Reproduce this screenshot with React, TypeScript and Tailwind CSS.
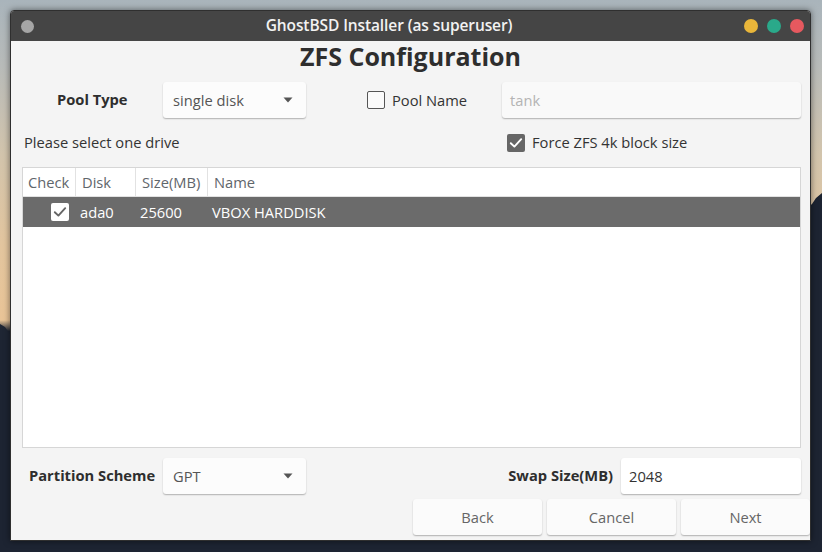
import React from "react";

const font = { fontFamily: '"Open Sans", "Noto Sans", sans-serif' };

function Arrow() {
  return (
    <svg width="10" height="6" viewBox="0 0 10 6" className="block">
      <path d="M0.5 0.5 L9.5 0.5 L5 5.5 Z" fill="#555" />
    </svg>
  );
}

function Check({ color = "#fff" }: { color?: string }) {
  return (
    <svg width="14" height="12" viewBox="0 0 14 12" className="block">
      <path d="M1.8 6.2 L5.4 9.6 L12.2 2.2" fill="none" stroke={color} strokeWidth="1.9" strokeLinecap="round" strokeLinejoin="round" />
    </svg>
  );
}

function Combo({ value }: { value: string }) {
  return (
    <div className="w-[143px] h-[36px] bg-[#fcfcfc] rounded-[3px] shadow-[0_1px_1.5px_rgba(0,0,0,0.28)] flex items-center justify-between pl-[10px] pr-[13px] text-[14.7px] text-[#555]">
      <span>{value}</span>
      <Arrow />
    </div>
  );
}

export default function App() {
  return (
    <div className="relative w-[822px] h-[552px] overflow-hidden bg-[linear-gradient(180deg,#a9b4bb_0%,#b8bbb9_12%,#d2c4ac_28%,#e3c59e_45%,#e9c497_58%,#1d2432_60%,#1b2230_100%)]" style={font}>
      <svg className="absolute left-0 top-0" width="822" height="552" viewBox="0 0 822 552">
        <path d="M0 324 L5 327 L10 334 L20 340 L30 344 L40 350 L40 552 L0 552 Z" fill="#1f2634" />
        <path d="M780 232 L800 214 L812 204 L816 198 L822 193 L822 552 L780 552 Z" fill="#1c2331" />
        <rect x="0" y="340" width="822" height="212" fill="#1d2432" />
        <rect x="780" y="230" width="42" height="130" fill="#1d2432" />
      </svg>
      <div className="absolute left-[10px] top-[10px] w-[801px] h-[531px] flex flex-col bg-[#f4f4f4] border border-[#2f2f2f] rounded-t-[4px] shadow-[0_0_6px_rgba(0,0,0,0.5)] overflow-hidden">
        {/* title bar */}
        <div className="h-[30px] shrink-0 bg-[#454545] flex items-center pl-[10px] pr-[6px] relative">
          <div className="w-[13px] h-[13px] rounded-full bg-[#a6a6a6]" />
          <div className="flex-1 text-center text-[15.5px] font-semibold text-[#f2f2f2] tracking-[-0.1px]">
            GhostBSD Installer (as superuser)
          </div>
          <div className="flex items-center gap-[9px]">
            <div className="w-[14px] h-[14px] rounded-full bg-[#e9b63a]" />
            <div className="w-[14px] h-[14px] rounded-full bg-[#2aa98a]" />
            <div className="w-[14px] h-[14px] rounded-full bg-[#e6595f]" />
          </div>
        </div>
        {/* heading */}
        <div className="h-[31px] shrink-0 flex items-center justify-center text-[25px] font-bold text-[#2e2e2e] leading-none">
          ZFS Configuration
        </div>
        {/* row 1 */}
        <div className="mt-[10px] h-[36px] shrink-0 flex items-center text-[14.7px] text-[#333]">
          <div className="ml-[46px] w-[106px] font-bold text-[#2e2e2e] text-[14.7px] -mt-[1px]">Pool Type</div>
          <Combo value="single disk" />
          <div className="ml-[61px] w-[18px] h-[18px] border-[1.5px] border-[#555] rounded-[2px] bg-[#fafafa]" />
          <div className="ml-[7px] w-[110px] text-[#333]">Pool Name</div>
          <div className="w-[299px] h-[36px] bg-[#f9f9f9] rounded-[3px] shadow-[0_1px_1.5px_rgba(0,0,0,0.28)] flex items-center pl-[8px] text-[#b4b4b4]">tank</div>
        </div>
        {/* row 2 */}
        <div className="mt-[15px] h-[19px] shrink-0 flex items-center text-[14.7px] text-[#333]">
          <div className="ml-[13px] w-[483px]">Please select one drive</div>
          <div className="w-[18px] h-[18px] rounded-[2px] bg-[#666] flex items-center justify-center">
            <Check />
          </div>
          <div className="ml-[7px]">Force ZFS 4k block size</div>
        </div>
        {/* table */}
        <div className="mt-[15px] ml-[11px] w-[779px] h-[281px] shrink-0 bg-white border border-[#d6d6d6] flex flex-col text-[14.7px]">
          <div className="h-[29px] flex items-stretch border-b border-[#e2e2e2] text-[#5f666b]">
            <div className="w-[53px] pl-[5px] flex items-center border-r border-[#e2e2e2]">Check</div>
            <div className="w-[60px] pl-[6px] flex items-center border-r border-[#e2e2e2]">Disk</div>
            <div className="w-[72px] pl-[6px] flex items-center border-r border-[#e2e2e2]">Size(MB)</div>
            <div className="pl-[6px] flex items-center">Name</div>
          </div>
          <div className="h-[30px] bg-[#6b6b6b] flex items-center text-white">
            <div className="w-[53px] flex justify-end pr-[7px]">
              <div className="w-[18px] h-[18px] bg-white rounded-[2px] flex items-center justify-center">
                <Check color="#666" />
              </div>
            </div>
            <div className="w-[60px] pl-[4px]">ada0</div>
            <div className="w-[72px] pl-[4px]">25600</div>
            <div className="pl-[4px]">VBOX HARDDISK</div>
          </div>
        </div>
        {/* row 3 */}
        <div className="mt-[10px] h-[36px] shrink-0 flex items-center text-[14.7px]">
          <div className="ml-[18px] w-[134px] font-bold text-[14.7px] text-[#2e2e2e] -mt-[1px]">Partition Scheme</div>
          <Combo value="GPT" />
          <div className="flex-1 text-right pr-[8px] font-bold text-[14.7px] text-[#2e2e2e] -mt-[1px]">Swap Size(MB)</div>
          <div className="w-[180px] h-[36px] bg-white rounded-[3px] shadow-[0_1px_1.5px_rgba(0,0,0,0.28)] flex items-center pl-[8px] text-[#333] mr-[9px]">2048</div>
        </div>
        {/* buttons */}
        <div className="mt-[5px] h-[36px] shrink-0 flex justify-end gap-[5px] text-[14.7px] text-[#666]">
          {["Back", "Cancel", "Next"].map((b) => (
            <div key={b} className="w-[129px] h-[36px] bg-[#fbfbfb] rounded-[3px] shadow-[0_1px_1.5px_rgba(0,0,0,0.28)] flex items-center justify-center">
              {b}
            </div>
          ))}
        </div>
      </div>
    </div>
  );
}
